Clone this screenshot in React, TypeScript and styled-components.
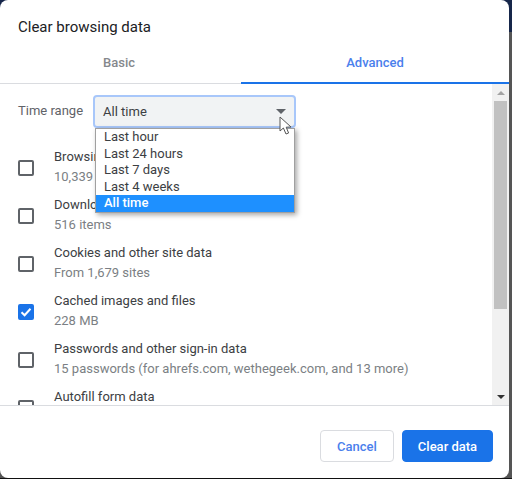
import React from "react";
import styled, { createGlobalStyle } from "styled-components";

const Global = createGlobalStyle`
  html, body { margin: 0; padding: 0; background: #fff; }
  body { width: 512px; height: 479px; overflow: hidden; font-family: Roboto, "Liberation Sans", sans-serif; }
  * { box-sizing: border-box; }
`;

const Stage = styled.div`
  width: 512px;
  height: 479px;
  background: linear-gradient(#16264a 0 32px, #555 32px);
  border-bottom: 1px solid #111;
`;

const Dialog = styled.div`
  width: 509px;
  height: 478px;
  background: #fff;
  border-radius: 8px;
  display: flex;
  flex-direction: column;
  overflow: hidden;
`;

const Title = styled.h1`
  margin: 0;
  height: 46px;
  padding: 17px 0 0 18px;
  font-size: 15px;
  line-height: 20px;
  font-weight: 400;
  color: #202124;
`;

const Tabs = styled.div`
  display: flex;
  height: 38px;
  border-bottom: 1px solid #dadce0;
`;

const Tab = styled.div<{ $active?: boolean }>`
  width: ${(p) => (p.$active ? "268px" : "241px")};
  margin-bottom: -1px;
  padding: 8px ${(p) => (p.$active ? "0" : "3px")} 0 0;
  text-align: center;
  font-size: 13px;
  line-height: 17px;
  font-weight: 500;
  color: ${(p) => (p.$active ? "#4a80ec" : "#85888c")};
  border-bottom: 2px solid ${(p) => (p.$active ? "#1a73e8" : "transparent")};
`;

const Body = styled.div`
  flex: 1;
  min-height: 0;
  display: flex;
  position: relative;
  overflow: hidden;
`;

const Content = styled.div`
  flex: 1;
  min-width: 0;
  overflow: hidden;
`;

const RangeRow = styled.div`
  height: 60px;
  padding: 11px 0 0 18px;
  display: flex;
  align-items: flex-start;
  gap: 10px;
`;

const RangeLabel = styled.span`
  font-size: 13px;
  line-height: 32px;
  color: #5f6368;
`;

const Select = styled.div`
  width: 203px;
  height: 33px;
  padding: 0 8px;
  display: flex;
  align-items: center;
  justify-content: space-between;
  font-size: 13px;
  color: #3c4043;
  background: #f1f3f4;
  border: 2px solid #a8c7fa;
  border-radius: 4px;
`;

const Caret = styled.span`
  width: 0;
  height: 0;
  border-left: 5px solid transparent;
  border-right: 5px solid transparent;
  border-top: 5px solid #5f6368;
`;

const Menu = styled.ul`
  position: absolute;
  left: 95px;
  top: 44px;
  width: 200px;
  height: 85px;
  margin: 0;
  padding: 0;
  list-style: none;
  background: #fff;
  border: 1px solid #a0a0a0;
  box-shadow: 2px 2px 5px rgba(0, 0, 0, 0.35);
`;

const MenuItem = styled.li<{ $selected?: boolean }>`
  height: 16.5px;
  padding-left: 8px;
  font-size: 13px;
  line-height: 16px;
  color: ${(p) => (p.$selected ? "#fff" : "#3c4043")};
  background: ${(p) => (p.$selected ? "#1e90ff" : "transparent")};
  font-weight: ${(p) => (p.$selected ? 500 : 400)};
`;

const Row = styled.div`
  height: 48px;
  padding-left: 18px;
  display: flex;
  align-items: center;
  gap: 20px;
`;

const Box = styled.span<{ $checked?: boolean }>`
  width: 16px;
  height: 16px;
  flex: none;
  display: flex;
  align-items: center;
  justify-content: center;
  border-radius: 2px;
  border: 2px solid ${(p) => (p.$checked ? "#1a73e8" : "#5f6368")};
  background: ${(p) => (p.$checked ? "#1a73e8" : "#fff")};
`;

const RowText = styled.div`
  display: flex;
  flex-direction: column;
  gap: 3px;
  padding-bottom: 3px;
`;

const RowTitle = styled.div`
  font-size: 13px;
  line-height: 17px;
  color: #3c4043;
  white-space: nowrap;
`;

const RowSub = styled.div`
  font-size: 13px;
  line-height: 17px;
  min-height: 17px;
  color: #7b7f84;
  white-space: nowrap;
`;

const Scrollbar = styled.div`
  width: 17px;
  flex: none;
  display: flex;
  flex-direction: column;
  align-items: center;
  background: #f1f1f1;
`;

const ArrowCell = styled.div`
  height: 17px;
  flex: none;
  display: flex;
  align-items: center;
  justify-content: center;
`;

const Arrow = styled.span<{ $down?: boolean }>`
  width: 0;
  height: 0;
  border-left: 4px solid transparent;
  border-right: 4px solid transparent;
  ${(p) => (p.$down ? "border-top: 4px solid #333;" : "border-bottom: 4px solid #a3a3a3;")}
`;

const Thumb = styled.div`
  width: 13px;
  height: 208px;
  flex: none;
  background: #c1c1c1;
`;

const ScrollSpace = styled.div`
  flex: 1;
`;

const Pointer = styled.svg`
  position: absolute;
  left: 279px;
  top: 32px;
`;

const Footer = styled.div`
  height: 73px;
  flex: none;
  border-top: 1px solid #dadce0;
  padding: 24px 16px 0 0;
  display: flex;
  justify-content: flex-end;
  gap: 8px;
`;

const Button = styled.button<{ $primary?: boolean }>`
  height: 32px;
  width: ${(p) => (p.$primary ? "91px" : "74px")};
  padding: 0;
  font-family: inherit;
  font-size: 13px;
  font-weight: 500;
  border-radius: 4px;
  color: ${(p) => (p.$primary ? "#fff" : "#4a80ec")};
  background: ${(p) => (p.$primary ? "#1a73e8" : "#fff")};
  border: 1px solid ${(p) => (p.$primary ? "#1a73e8" : "#dadce0")};
`;

const rows = [
  { title: "Browsing history", sub: "10,339 items" },
  { title: "Download history", sub: "516 items" },
  { title: "Cookies and other site data", sub: "From 1,679 sites" },
  { title: "Cached images and files", sub: "228 MB", checked: true },
  { title: "Passwords and other sign-in data", sub: "15 passwords (for ahrefs.com, wethegeek.com, and 13 more)" },
  { title: "Autofill form data", sub: "" },
];

const options = ["Last hour", "Last 24 hours", "Last 7 days", "Last 4 weeks", "All time"];

export default function App() {
  return (
    <Stage>
      <Global />
      <Dialog>
        <Title>Clear browsing data</Title>
        <Tabs>
          <Tab>Basic</Tab>
          <Tab $active>Advanced</Tab>
        </Tabs>
        <Body>
          <Content>
            <RangeRow>
              <RangeLabel>Time range</RangeLabel>
              <Select>
                All time
                <Caret />
              </Select>
            </RangeRow>
            {rows.map((r) => (
              <Row key={r.title}>
                <Box $checked={r.checked}>
                  {r.checked && (
                    <svg width="12" height="12" viewBox="0 0 12 12" fill="none">
                      <path d="M1.5 6.2 L4.6 9.2 L10.5 2.8" stroke="#fff" strokeWidth="2" />
                    </svg>
                  )}
                </Box>
                <RowText>
                  <RowTitle>{r.title}</RowTitle>
                  <RowSub>{r.sub}</RowSub>
                </RowText>
              </Row>
            ))}
          </Content>
          <Scrollbar>
            <ArrowCell>
              <Arrow />
            </ArrowCell>
            <Thumb />
            <ScrollSpace />
            <ArrowCell>
              <Arrow $down />
            </ArrowCell>
          </Scrollbar>
          <Menu>
            {options.map((o) => (
              <MenuItem key={o} $selected={o === "All time"}>
                {o}
              </MenuItem>
            ))}
          </Menu>
          <Pointer width="14" height="20" viewBox="0 0 14 20">
            <path
              d="M1 1 L1 15 L4.4 12 L7 18 L9.6 17 L7.2 11.2 L12 11 Z"
              fill="#fff"
              stroke="#555"
              strokeWidth="1"
              strokeLinejoin="round"
            />
          </Pointer>
        </Body>
        <Footer>
          <Button>Cancel</Button>
          <Button $primary>Clear data</Button>
        </Footer>
      </Dialog>
    </Stage>
  );
}
